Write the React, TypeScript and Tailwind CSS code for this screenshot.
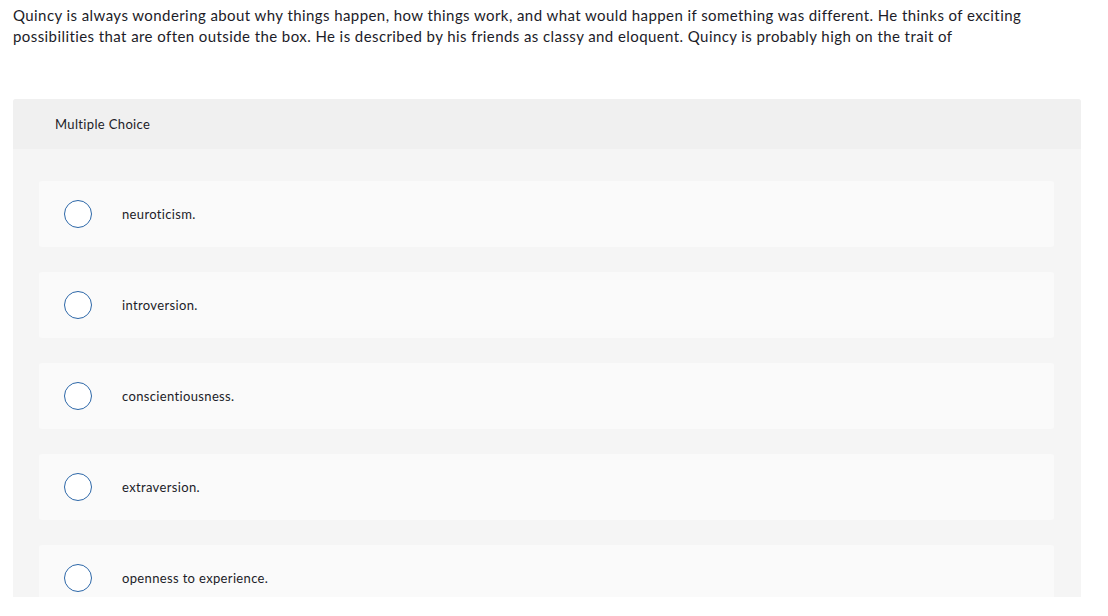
import React from "react";

const options = [
  "neuroticism.",
  "introversion.",
  "conscientiousness.",
  "extraversion.",
  "openness to experience.",
];

export default function App() {
  return (
    <div
      className="w-[1108px] h-[616px] overflow-hidden bg-white text-[#1c1c28]"
      style={{ fontFamily: "Lato, 'Open Sans', sans-serif" }}
    >
      <div className="pl-[13px] pt-[5px] text-[15px] leading-[21px] tracking-[0.42px]">
        Quincy is always wondering about why things happen, how things work, and what would happen if something was different. He thinks of exciting
        <br />
        possibilities that are often outside the box. He is described by his friends as classy and eloquent. Quincy is probably high on the trait of
      </div>
      <div className="h-[550px] overflow-hidden">
        <div className="ml-[13px] mt-[52px] w-[1068px] rounded-t-[3px] bg-[#f5f5f5]">
          <div className="h-[50px] flex items-center pl-[42px] pt-[2px] bg-[#f0f0f0] rounded-t-[3px] text-[13px] tracking-[0.35px]">
            Multiple Choice
          </div>
          <div className="flex flex-col gap-[25px] pt-[32px] pb-[30px] px-[26px]">
            {options.map((o) => (
              <div
                key={o}
                className="h-[66px] w-[1015px] rounded-[3px] bg-[#fafafa] flex items-center"
              >
                <div className="ml-[25px] w-[28px] h-[28px] rounded-full border-[1.5px] border-[#2c67a8] bg-white" />
                <span className="ml-[30px] pt-[2px] text-[13px] tracking-[0.35px] text-[#1c1c28]">{o}</span>
              </div>
            ))}
          </div>
        </div>
      </div>
    </div>
  );
}
